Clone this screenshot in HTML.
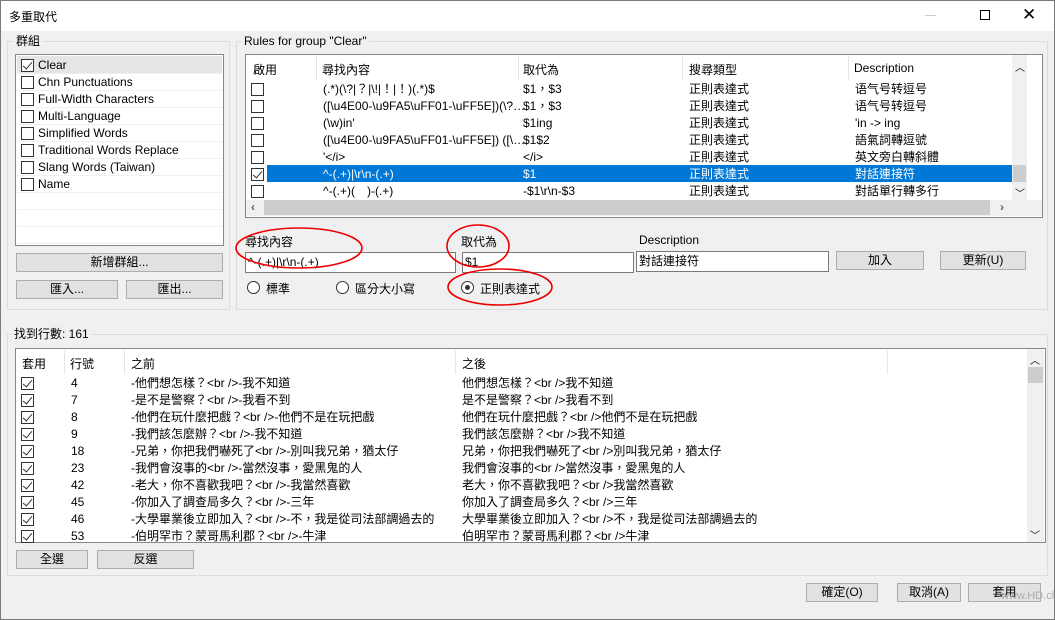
<!DOCTYPE html>
<html><head><meta charset="utf-8"><style>
*{margin:0;padding:0;box-sizing:border-box}
body{width:1055px;height:620px;overflow:hidden;background:#f0f0f0;font-family:"Liberation Sans","Noto Sans CJK TC",sans-serif;font-size:12px;color:#000;position:relative}
.a{position:absolute;white-space:nowrap}
.gb{position:absolute;border:1px solid #dcdcdc}
.gl{position:absolute;background:#f0f0f0;padding:0 2px;line-height:14px}
.lst{position:absolute;background:#fff;border:1px solid #828790}
.btn{position:absolute;background:#e1e1e1;border:1px solid #adadad;text-align:center;line-height:17px}
.cb{position:absolute;width:13px;height:13px;border:1px solid #333;background:#fff}
.ck::after{content:"";position:absolute;left:3px;top:0px;width:4px;height:8px;border:solid #333;border-width:0 1px 1px 0;transform:rotate(40deg)}
.inp{position:absolute;background:#fff;border:1px solid #7a7a7a;line-height:18px;padding-left:2px}
.rb{position:absolute;width:13px;height:13px;border:1px solid #333;border-radius:50%;background:#fff}
.row{position:absolute;height:17px;line-height:17px}
.sep{position:absolute;width:1px;background:#e5e5e5}
</style></head><body>
<div class="a" style="left:0;top:0;width:1055px;height:31px;background:#fff"></div>
<div class="a" style="left:0;top:0;width:1055px;height:620px;border:1px solid #7a7a7a;pointer-events:none;z-index:9"></div>
<div class="a" style="left:9px;top:8px;font-size:12px">多重取代</div>
<div class="a" style="left:925px;top:15px;width:11px;height:1px;background:#ccc"></div>
<div class="a" style="left:980px;top:10px;width:10px;height:10px;border:1px solid #000"></div>
<div class="a" style="left:1022px;top:5px;font-size:17px;line-height:20px">✕</div>

<!-- group box -->
<div class="gb" style="left:7px;top:41px;width:223px;height:269px"></div>
<div class="gl" style="left:14px;top:34px">群組</div>
<div class="lst" style="left:15px;top:54px;width:209px;height:192px">
 <div class="row" style="left:1px;top:1px;width:205px;background:#e5e5e5"></div>
</div>
<div class="a" style="left:16px;top:55px;width:206px">
 <div style="position:relative;height:187px">
 </div>
</div>
<div id="grp"></div>

<div class="btn" style="left:16px;top:253px;width:207px;height:19px">新增群組...</div>
<div class="btn" style="left:16px;top:280px;width:102px;height:19px">匯入...</div>
<div class="btn" style="left:126px;top:280px;width:97px;height:19px">匯出...</div>

<!-- rules -->
<div class="gb" style="left:236px;top:41px;width:812px;height:269px"></div>
<div class="gl" style="left:242px;top:34px">Rules for group "Clear"</div>
<div class="lst" style="left:245px;top:54px;width:798px;height:164px"></div>
<div class="sep" style="left:316px;top:56px;height:24px"></div>
<div class="sep" style="left:518px;top:56px;height:24px"></div>
<div class="sep" style="left:682px;top:56px;height:24px"></div>
<div class="sep" style="left:848px;top:56px;height:24px"></div>
<div class="a" style="left:253px;top:61px">啟用</div>
<div class="a" style="left:322px;top:61px">尋找內容</div>
<div class="a" style="left:523px;top:61px">取代為</div>
<div class="a" style="left:689px;top:61px">搜尋類型</div>
<div class="a" style="left:854px;top:61px">Description</div>
<div class="a" style="left:267px;top:165px;width:745px;height:17px;background:#0078d7"></div>
<div class="a" style="left:1012px;top:55px;width:15px;height:146px;background:#f0f0f0"></div>
<div class="a" style="left:1013px;top:165px;width:13px;height:17px;background:#cdcdcd"></div>
<div class="a" style="left:1015px;top:59px;font-size:10px">︿</div>
<div class="a" style="left:1015px;top:185px;font-size:10px">﹀</div>
<div class="a" style="left:246px;top:200px;width:796px;height:16px;background:#f0f0f0"></div>
<div class="a" style="left:264px;top:200px;width:726px;height:15px;background:#cdcdcd"></div>
<div class="a" style="left:251px;top:200px;font-size:12px;font-weight:bold;color:#606060">‹</div>
<div class="a" style="left:1000px;top:200px;font-size:12px;font-weight:bold;color:#606060">›</div>
<div id="rules"></div>

<div class="a" style="left:245px;top:233px">尋找內容</div>
<div class="a" style="left:461px;top:233px">取代為</div>
<div class="a" style="left:639px;top:233px">Description</div>
<div class="inp" style="left:245px;top:252px;width:211px;height:21px;color:#000">^-(.+)|\r\n-(.+)</div>
<div class="inp" style="left:462px;top:252px;width:172px;height:21px">$1</div>
<div class="inp" style="left:636px;top:251px;width:193px;height:21px">對話連接符</div>
<div class="btn" style="left:836px;top:251px;width:88px;height:19px">加入</div>
<div class="btn" style="left:940px;top:251px;width:86px;height:19px">更新(U)</div>
<div class="rb" style="left:247px;top:281px"></div>
<div class="a" style="left:266px;top:280px">標準</div>
<div class="rb" style="left:336px;top:281px"></div>
<div class="a" style="left:355px;top:280px">區分大小寫</div>
<div class="rb" style="left:461px;top:281px"><div style="position:absolute;left:3px;top:3px;width:5px;height:5px;border-radius:50%;background:#333"></div></div>
<div class="a" style="left:480px;top:280px">正則表達式</div>

<svg class="a" style="left:0;top:0;z-index:5" width="1055" height="620">
<g fill="none" stroke="#e00" stroke-width="1.6">
<ellipse cx="299" cy="248" rx="63" ry="20"/>
<ellipse cx="478" cy="246" rx="31" ry="21"/>
<ellipse cx="500" cy="287" rx="52" ry="18"/>
</g></svg>

<!-- found -->
<div class="gb" style="left:7px;top:334px;width:1041px;height:242px"></div>
<div class="gl" style="left:12px;top:327px">找到行數: 161</div>
<div class="lst" style="left:15px;top:348px;width:1031px;height:195px"></div>
<div class="sep" style="left:64px;top:350px;height:24px"></div>
<div class="sep" style="left:124px;top:350px;height:24px"></div>
<div class="sep" style="left:455px;top:350px;height:24px"></div>
<div class="sep" style="left:887px;top:350px;height:24px"></div>
<div class="a" style="left:22px;top:355px">套用</div>
<div class="a" style="left:70px;top:355px">行號</div>
<div class="a" style="left:131px;top:355px">之前</div>
<div class="a" style="left:462px;top:355px">之後</div>
<div class="a" style="left:1027px;top:349px;width:17px;height:193px;background:#f0f0f0"></div>
<div class="a" style="left:1028px;top:367px;width:15px;height:16px;background:#cdcdcd"></div>
<div class="a" style="left:1030px;top:352px;font-size:10px">︿</div>
<div class="a" style="left:1030px;top:527px;font-size:10px">﹀</div>
<div id="found"></div>

<div class="btn" style="left:16px;top:550px;width:72px;height:19px">全選</div>
<div class="btn" style="left:97px;top:550px;width:97px;height:19px">反選</div>

<div class="btn" style="left:806px;top:583px;width:72px;height:19px">確定(O)</div>
<div class="btn" style="left:897px;top:583px;width:64px;height:19px">取消(A)</div>
<div class="btn" style="left:968px;top:583px;width:73px;height:19px">套用</div>
<div class="a" style="left:1001px;top:590px;color:#aaa;font-size:11px;z-index:6">www.HD.club.tw</div>

<script>
var g=["Clear","Chn Punctuations","Full-Width Characters","Multi-Language","Simplified Words","Traditional Words Replace","Slang Words (Taiwan)","Name"],h="";
g.forEach(function(t,i){var y=57+i*17;h+='<div class="cb'+(i==0?' ck':'')+'" style="left:21px;top:'+(y+2)+'px"></div><div class="row" style="left:38px;top:'+y+'px">'+t+'</div><div class="a" style="left:17px;top:'+(y+16)+'px;width:205px;height:1px;background:#f0f0f0"></div>';});
for(var i=8;i<11;i++)h+='<div class="a" style="left:17px;top:'+(57+i*17+16)+'px;width:205px;height:1px;background:#f0f0f0"></div>';
document.getElementById('grp').innerHTML=h;
var r=[["(.*)(\\?|？|\\!|！|！)(.*)$","$1，$3","語气号转逗号"],["([\\u4E00-\\u9FA5\\uFF01-\\uFF5E])(\\?…","$1，$3","语气号转逗号"],["(\\w)in'","$1ing","'in -> ing"],["([\\u4E00-\\u9FA5\\uFF01-\\uFF5E]) ([\\…","$1$2","語氣詞轉逗號"],["'&lt;/i&gt;","&lt;/i&gt;","英文旁白轉斜體"],["^-(.+)|\\r\\n-(.+)","$1","對話連接符"],["^-(.+)(　)-(.+)","-$1\\r\\n-$3","對話單行轉多行"]];
r[0][2]="语气号转逗号";h="";
r.forEach(function(t,i){var y=81+i*17,c=i==5?'color:#fff;':'';h+='<div class="cb'+(i==5?' ck':'')+'" style="left:251px;top:'+(y+2)+'px"></div><div class="row" style="'+c+'left:323px;top:'+y+'px">'+t[0]+'</div><div class="row" style="'+c+'left:523px;top:'+y+'px">'+t[1]+'</div><div class="row" style="'+c+'left:689px;top:'+y+'px">正則表達式</div><div class="row" style="'+c+'left:855px;top:'+y+'px">'+t[2]+'</div>';});
document.getElementById('rules').innerHTML=h;
var f=[["4","他們想怎樣？","我不知道"],["7","是不是警察？","我看不到"],["8","他們在玩什麼把戲？","他們不是在玩把戲"],["9","我們該怎麼辦？","我不知道"],["18","兄弟，你把我們嚇死了","別叫我兄弟，猶太仔"],["23","我們會沒事的","當然沒事，愛黑鬼的人"],["42","老大，你不喜歡我吧？","我當然喜歡"],["45","你加入了調查局多久？","三年"],["46","大學畢業後立即加入？","不，我是從司法部調過去的"],["53","伯明罕市？蒙哥馬利郡？","牛津"]];h="";
f.forEach(function(t,i){var y=375+i*17;h+='<div class="cb ck" style="left:21px;top:'+(y+2)+'px"></div><div class="row" style="left:71px;top:'+y+'px">'+t[0]+'</div><div class="row" style="left:131px;top:'+y+'px">-'+t[1]+'&lt;br /&gt;-'+t[2]+'</div><div class="row" style="left:462px;top:'+y+'px">'+t[1]+'&lt;br /&gt;'+t[2]+'</div>';});
document.getElementById('found').innerHTML=h;
</script>
</body></html>
